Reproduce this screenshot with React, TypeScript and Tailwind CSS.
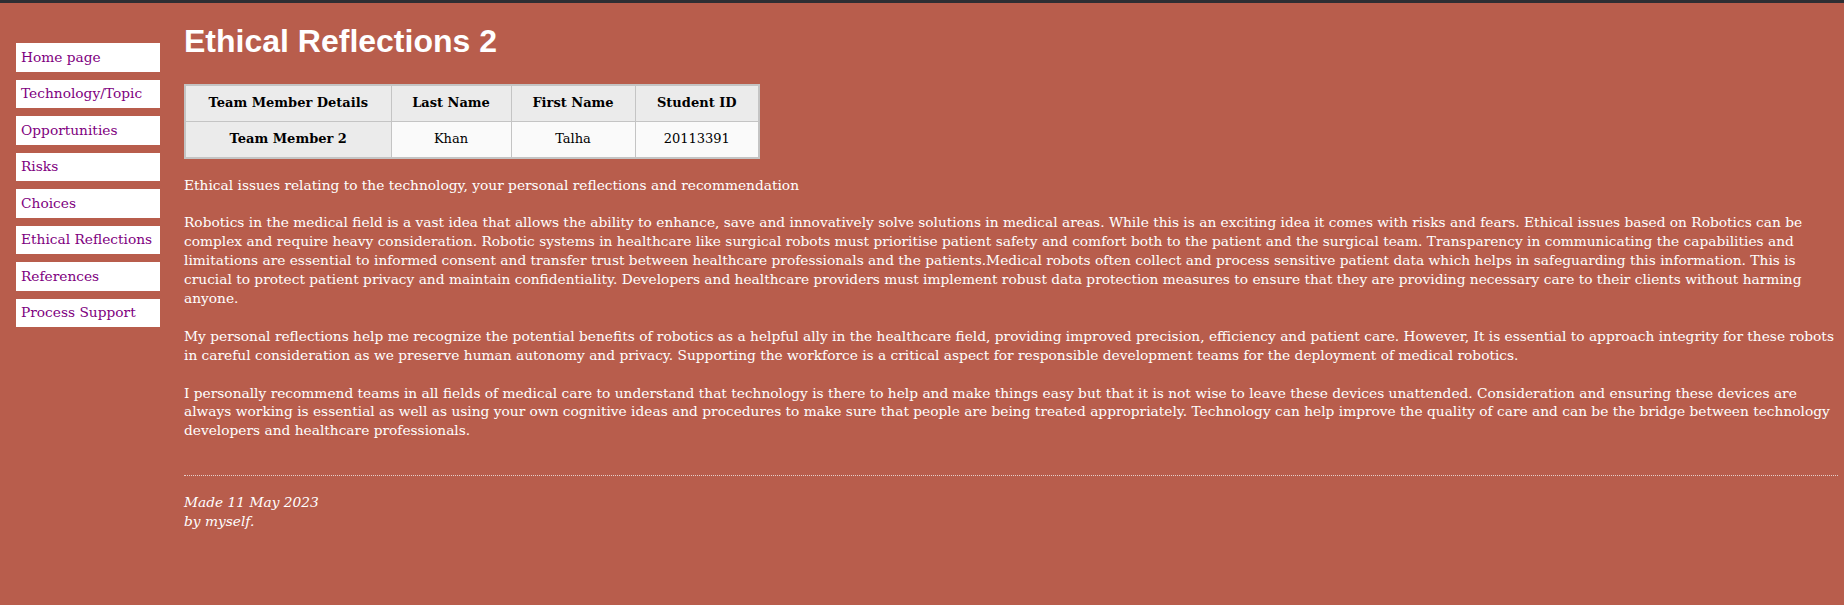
const navItems = [
  "Home page",
  "Technology/Topic",
  "Opportunities",
  "Risks",
  "Choices",
  "Ethical Reflections",
  "References",
  "Process Support",
];

export default function App() {
  return (
    <div className="min-h-[605px] bg-[#b85d4c] border-t-[3px] border-[#2e2e33] flex font-['DejaVu_Serif',serif] text-[13.75px] leading-[18.9px] text-white">
      {/* left menu */}
      <nav className="w-[184px] shrink-0 pt-[40px] pl-[16px]">
        <ul className="flex flex-col gap-[8px]">
          {navItems.map((item) => (
            <li key={item}>
              <a
                href="#"
                className="flex items-center w-[144px] h-[28.5px] bg-white pl-[5px] text-[#800080] whitespace-nowrap"
              >
                {item}
              </a>
            </li>
          ))}
        </ul>
      </nav>

      <main className="w-[1654px] pt-[20px]">
        <h1 className="font-['Liberation_Sans',Arial,sans-serif] font-bold text-[32px] leading-[37px] mb-[23.6px]">
          Ethical Reflections 2
        </h1>

        <table className="table-fixed border-collapse w-[574px] border-2 border-[#c4c4c4] text-[13px] text-black">
          <colgroup>
            <col className="w-[206px]" />
            <col className="w-[120px]" />
            <col className="w-[124px]" />
            <col className="w-[124px]" />
          </colgroup>
          <thead>
            <tr className="h-[36.5px] bg-[#ebebeb]">
              <th className="border border-[#c4c4c4] font-bold">Team Member Details</th>
              <th className="border border-[#c4c4c4] font-bold">Last Name</th>
              <th className="border border-[#c4c4c4] font-bold">First Name</th>
              <th className="border border-[#c4c4c4] font-bold">Student ID</th>
            </tr>
          </thead>
          <tbody>
            <tr className="h-[36.5px] bg-[#fafafa]">
              <th className="border border-[#c4c4c4] bg-[#ebebeb] font-bold">Team Member 2</th>
              <td className="border border-[#c4c4c4] text-center">Khan</td>
              <td className="border border-[#c4c4c4] text-center">Talha</td>
              <td className="border border-[#c4c4c4] text-center">20113391</td>
            </tr>
          </tbody>
        </table>

        <div className="mt-[17px] flex flex-col gap-[18.9px]">
          <p>Ethical issues relating to the technology, your personal reflections and recommendation</p>
          <p>
            Robotics in the medical field is a vast idea that allows the ability to enhance, save and innovatively solve
            solutions in medical areas. While this is an exciting idea it comes with risks and fears. Ethical issues based
            on Robotics can be complex and require heavy consideration. Robotic systems in healthcare like surgical robots
            must prioritise patient safety and comfort both to the patient and the surgical team. Transparency in
            communicating the capabilities and limitations are essential to informed consent and transfer trust between
            healthcare professionals and the patients.Medical robots often collect and process sensitive patient data which
            helps in safeguarding this information. This is crucial to protect patient privacy and maintain
            confidentiality. Developers and healthcare providers must implement robust data protection measures to ensure
            that they are providing necessary care to their clients without harming anyone.
          </p>
          <p>
            My personal reflections help me recognize the potential benefits of robotics as a helpful ally in the
            healthcare field, providing improved precision, efficiency and patient care. However, It is essential to
            approach integrity for these robots in careful consideration as we preserve human autonomy and privacy.
            Supporting the workforce is a critical aspect for responsible development teams for the deployment of medical
            robotics.
          </p>
          <p>
            I personally recommend teams in all fields of medical care to understand that technology is there to help and
            make things easy but that it is not wise to leave these devices unattended. Consideration and ensuring these
            devices are always working is essential as well as using your own cognitive ideas and procedures to make sure
            that people are being treated appropriately. Technology can help improve the quality of care and can be the
            bridge between technology developers and healthcare professionals.
          </p>
        </div>

        <hr className="mt-[35px] border-0 border-t border-dotted border-[#e5d0cb]" />

        <footer className="mt-[16.5px] italic">
          Made 11 May 2023
          <br />
          by myself.
        </footer>
      </main>
    </div>
  );
}
